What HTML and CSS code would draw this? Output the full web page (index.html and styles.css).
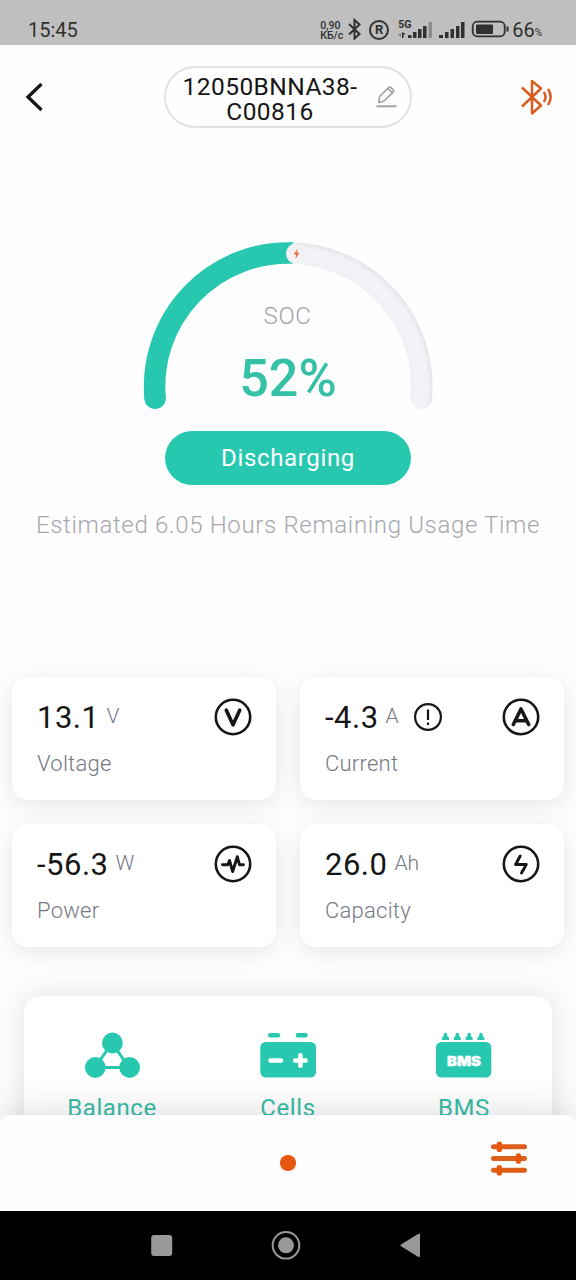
FILE: index.html
```html
<!DOCTYPE html>
<html lang="en">
<head>
<meta charset="utf-8">
<title>Battery monitor</title>
<link rel="stylesheet" href="styles.css">
</head>
<body>
<div class="screen">
  <div class="status">
    <span class="clock">15:45</span>
    <div class="indicators">
      <div class="speed"><span>0,90</span><span>КБ/с</span></div>
      <svg class="ind-bt" width="14" height="22" viewBox="347 18 14 22"><path d="M348 24l10.500 10-5 4.500V20l5 4.500L348 34.500" fill="none" stroke="#303030" stroke-width="2"/></svg>
      <div class="registered">R</div>
      <div class="network">
        <span class="network-type">5G</span>
        <svg width="35" height="20" viewBox="397 20 35 20"><g fill="#303030"><path d="M401 32l3.500 2-2 1v3H401zM407 35h3.500v3H407zM412 32h3.500v6H412zM417 29h3.500v9H417zM422 26h3.500v12H422z"/><path d="M397 35l3-2v4z" opacity=".45"/><path d="M427.500 22h3.500v16h-3.500z" opacity=".35"/></g></svg>
      </div>
      <svg class="ind-signal" width="27" height="20" viewBox="438 20 27 20"><path d="M438 35h4v3h-4zM444 32h3.500v6H444zM449.500 29h3.500v9h-3.500zM455 26h3.500v12H455zM460 22h3.500v16H460z" fill="#303030"/></svg>
      <svg class="ind-battery" width="38" height="18" viewBox="470 20 38 18"><rect x="471.700" y="21.700" width="32" height="14.600" rx="4.500" fill="none" stroke="#303030" stroke-width="1.800"/><rect x="475" y="24.500" width="17" height="9.500" rx="1" fill="#303030"/><path d="M506.500 26.500v5" stroke="#303030" stroke-width="2"/></svg>
      <span class="charge">66</span><span class="pct">%</span>
    </div>
  </div>

  <div class="header">
    <svg width="20" height="32" viewBox="24 81 20 32"><path d="M41.500 84L28 97l13.500 13" fill="none" stroke="#161616" stroke-width="3.300"/></svg>
    <div class="device">
      <div class="device-name"><span>12050BNNA38-</span><span>C00816</span></div>
      <svg width="22" height="24" viewBox="376 85 22 24"><g fill="none" stroke="#a2a2a8"><path d="M378.800 102.500l.8-6 9-8.800q1.200-1 2.400 0l2.200 2.200q1 1.200 0 2.300l-9.200 8.800zM388 88.700l4.800 4.600" stroke-width="1.700" stroke-linejoin="round"/><path d="M376.500 106.300h20" stroke-width="2"/></g></svg>
    </div>
    <svg width="34" height="38" viewBox="519 78 34 38"><g fill="none" stroke="#d95d20" stroke-width="2.500" stroke-linejoin="round"><path d="M522 87.500L541 105.500l-9 8V81l9 7.500L522 106.500"/><path d="M543.800 92q3.600 5 0 10M548 89q5.300 8 0 16"/></g></svg>
  </div>

  <div class="summary">
    <div class="gauge">
      <svg width="300" height="180" viewBox="138 236 300 180">
        <defs>
          <radialGradient id="track" gradientUnits="userSpaceOnUse" cx="288.300" cy="386.500" r="145">
            <stop offset=".85" stop-color="#f0f1f5"/><stop offset=".91" stop-color="#f3f4f8"/><stop offset=".96" stop-color="#f1f2f6"/><stop offset="1" stop-color="#e2e3e6"/>
          </radialGradient>
        </defs>
        <path d="M288.300 253A133.500 133.500 0 0 1 421.300 398.200" fill="none" stroke="url(#track)" stroke-width="21.500" stroke-linecap="round"/>
        <path d="M155.100 398.200A133.500 133.500 0 0 1 293 253.100" fill="none" stroke="#28c8b0" stroke-width="21.500"/>
        <circle cx="155.100" cy="398.200" r="10.750" fill="#28c8b0"/>
        <circle cx="296.500" cy="253.600" r="10.500" fill="#f2f2f4"/>
        <path d="M297.800 248.500l-4.300 6h2.800l-1 4.500 4.400-6.200h-2.900z" fill="#e4703c"/>
      </svg>
      <div class="reading"><span class="soc">SOC</span><span class="soc-value">52%</span></div>
    </div>
    <div class="state">Discharging</div>
    <div class="estimate">Estimated 6.05 Hours Remaining Usage Time</div>
  </div>

  <div class="cards">
    <div class="card">
      <div class="value-row"><span class="value">13.1</span><span class="unit">V</span>
        <svg class="card-icon" width="40" height="40" viewBox="-20 -20 40 40"><circle r="17.200"/><path class="bold" d="M-6.700-6.800L0 7.800 6.700-6.800"/></svg>
      </div>
      <div class="label">Voltage</div>
    </div>
    <div class="card">
      <div class="value-row"><span class="value">-4.3</span><span class="unit">A</span>
        <svg class="notice" width="30" height="30" viewBox="-15 -15 30 30"><circle r="12.900"/><path d="M0-7.500V3M0 5.500V8"/></svg>
        <svg class="card-icon" width="40" height="40" viewBox="-20 -20 40 40"><circle r="17.200"/><path class="bold" d="M-7.700 7.500L0-8 7.700 7.500M-5 3.800H5"/></svg>
      </div>
      <div class="label">Current</div>
    </div>
    <div class="card">
      <div class="value-row"><span class="value">-56.3</span><span class="unit">W</span>
        <svg class="card-icon" width="40" height="40" viewBox="-20 -20 40 40"><circle r="17.200"/><path class="pulse" d="M-10.500.8H-5.300L-3.500-3.500-.3 7.500 4.300-7.300 6.500.8H10.500"/></svg>
      </div>
      <div class="label">Power</div>
    </div>
    <div class="card">
      <div class="value-row"><span class="value">26.0</span><span class="unit">Ah</span>
        <svg class="card-icon" width="40" height="40" viewBox="-20 -20 40 40"><circle r="17.200"/><path class="pulse" d="M-.8-8L-5.400.5H5.300L.5 9"/></svg>
      </div>
      <div class="label">Capacity</div>
    </div>
  </div>

  <div class="panel-area">
    <div class="panel">
      <div class="tool">
        <svg width="60" height="50" viewBox="82 1030 60 50"><path d="M112 1043L95 1067.500h34z" fill="none" stroke="#28c8b0" stroke-width="3"/><g fill="#28c8b0"><circle cx="112.400" cy="1043" r="10.400"/><circle cx="95.300" cy="1067.500" r="10.400"/><circle cx="129.600" cy="1067.500" r="10.400"/></g></svg>
        <span>Balance</span>
      </div>
      <div class="tool">
        <svg width="60" height="50" viewBox="258 1030 60 50"><rect x="260.300" y="1042" width="55.700" height="35.500" rx="5.500" fill="#28c8b0"/><path d="M270.300 1035.200h7.500M298 1035.200h7.500" stroke="#28c8b0" stroke-width="4.600" stroke-linecap="round"/><path d="M270.500 1060.500h10.500M295.200 1060.500h10.500M300.400 1055.200v10.600" stroke="#fff" stroke-width="4.600" stroke-linecap="round"/></svg>
        <span>Cells</span>
      </div>
      <div class="tool">
        <div class="bms-icon">
          <svg width="60" height="50" viewBox="434 1030 60 50"><rect x="436" y="1042" width="55.300" height="35.500" rx="5.500" fill="#28c8b0"/><g fill="#28c8b0"><path id="pin" d="M444 1033.500q1.500-1.500 3 0l.5 3 1.500 1v2.600h-7v-2.600l1.500-1z"/><use href="#pin" x="11.800"/><use href="#pin" x="23.600"/><use href="#pin" x="35.400"/></g></svg>
          <b>BMS</b>
        </div>
        <span>BMS</span>
      </div>
    </div>
  </div>

  <div class="tabbar">
    <i class="page-dot"></i>
    <svg class="settings" width="38" height="36" viewBox="490 1141 38 36"><g stroke="#dd5f1b" stroke-width="5" stroke-linecap="round"><path d="M493.500 1146.800h31M493.500 1158.500h31M493.500 1170.300h31"/></g><g fill="#e7570e"><rect x="496.700" y="1141.500" width="5.300" height="10.600" rx="2.600"/><rect x="515.800" y="1153.200" width="5.300" height="10.600" rx="2.600"/><rect x="496.700" y="1165" width="5.300" height="10.600" rx="2.600"/></g></svg>
  </div>

  <div class="navbar">
    <svg width="22" height="30" viewBox="151 1230 22 30"><rect x="151.200" y="1235" width="21" height="21" rx="3" fill="#999"/></svg>
    <svg width="30" height="30" viewBox="271 1230 30 30"><circle cx="286" cy="1245.300" r="13.300" fill="none" stroke="#999" stroke-width="2"/><circle cx="286" cy="1245.300" r="8" fill="#999"/></svg>
    <svg width="20" height="30" viewBox="400 1230 20 30"><path d="M401.500 1245.300l17.500-10.800v21.600z" fill="#999" stroke="#999" stroke-width="2" stroke-linejoin="round"/></svg>
  </div>
</div>
</body>
</html>
```
FILE: styles.css
```css
* { box-sizing: border-box; }
body { margin: 0; font-family: Roboto, "Liberation Sans", sans-serif; background: #fff; }
svg { display: block; flex: none; }

.screen { width: 576px; height: 1280px; display: flex; flex-direction: column; overflow: hidden; background: #fefefe; }

.status { height: 45px; flex: none; background: #bfbfbf; color: #303030; display: flex; justify-content: space-between; padding: 18px 34px 0 28px; }
.clock { font-size: 20px; line-height: 24px; }
.indicators { display: flex; align-items: flex-start; }
.speed { display: flex; flex-direction: column; width: 23px; margin-top: 3px; font-size: 10.500px; font-weight: 500; line-height: 10px; white-space: nowrap; }
.ind-bt { margin-left: 5px; }
.registered { width: 20px; height: 20px; margin: 2px 0 0 7px; border: 2px solid #303030; border-radius: 50%; font-size: 13px; font-weight: 700; line-height: 16px; text-align: center; }
.network { display: grid; width: 35px; margin: 2px 0 0 9px; }
.network > * { grid-area: 1 / 1; }
.network-type { font-size: 10.500px; font-weight: 700; line-height: 10px; }
.ind-signal { margin: 2px 0 0 6px; }
.ind-battery { margin: 2px 0 0 5px; }
.charge { margin-left: 3px; font-size: 20px; line-height: 24px; }
.pct { font-size: 10px; line-height: 10px; margin: 10px 0 0 0; }

.header { flex: none; height: 105px; display: flex; justify-content: space-between; padding: 21px 23px 0 24px; align-items: flex-start; }
.header > svg:first-child { margin-top: 15px; }
.header > svg:last-child { margin-top: 12px; }
.device { width: 248px; height: 62px; margin-left: 13px; border: 2px solid #e2e2e4; border-radius: 31px; display: flex; align-items: center; gap: 18px; padding: 3px 0 0 16px; }
.device-name { width: 176px; flex: none; display: flex; flex-direction: column; align-items: center; font-size: 24.500px; line-height: 25px; letter-spacing: .45px; color: #161616; white-space: nowrap; }
.device svg { margin-top: -3px; }

.summary { flex: none; height: 527px; padding-top: 86px; display: flex; flex-direction: column; align-items: center; }
.gauge { display: grid; }
.gauge > * { grid-area: 1 / 1; }
.reading { display: flex; flex-direction: column; align-items: center; padding-top: 65px; }
.soc { margin-right: 1px; font-size: 24px; line-height: 30px; font-weight: 300; letter-spacing: .6px; color: #a3a3ad; }
.soc-value { margin-top: 18px; font-size: 52px; line-height: 60px; font-weight: 500; color: #35c1a5; }
.state { width: 246px; height: 54px; margin-top: 15px; border-radius: 27px; background: #28c8b0; color: #fff; font-size: 24px; line-height: 54px; letter-spacing: .65px; text-align: center; }
.estimate { margin-top: 25px; font-size: 24px; line-height: 30px; font-weight: 300; letter-spacing: .66px; color: #a7a7b0; white-space: nowrap; }

.cards { flex: none; display: grid; grid-template-columns: 264px 264px; grid-auto-rows: 123px; column-gap: 24px; row-gap: 24px; padding: 0 12px; }
.card { border-radius: 16px; background: #fff; padding: 20px 23px 0 25px; box-shadow: 0 5px 22px rgba(70, 70, 90, .13); }
.value-row { display: flex; align-items: center; height: 40px; }
.value { margin-top: 2px; font-size: 31px; line-height: 40px; letter-spacing: .5px; color: #161616; }
.unit { margin: -2px 0 0 7px; font-size: 21px; font-weight: 300; color: #757985; }
.card-icon { margin-left: auto; fill: none; stroke: #161616; stroke-width: 2.600; stroke-linecap: round; stroke-linejoin: round; }
.card-icon .bold { stroke-width: 3.600; }
.card-icon .pulse { stroke-width: 2.900; }
.notice { margin-left: 14px; fill: none; stroke: #161616; stroke-width: 2.200; }
.label { margin-top: 14px; font-size: 22px; line-height: 26px; font-weight: 300; letter-spacing: .25px; color: #757985; }

.panel-area { flex: 1; min-height: 0; padding: 49px 24px 0; }
.panel { height: 180px; border-radius: 16px; background: #fff; box-shadow: 0 0 30px rgba(70, 70, 90, .16); display: grid; grid-template-columns: repeat(3, 1fr); padding-top: 34px; }
.tool { display: flex; flex-direction: column; align-items: center; font-size: 24px; line-height: 30px; letter-spacing: .6px; color: #35bda3; }
.tool > span { margin-top: 13px; }
.bms-icon { display: grid; }
.bms-icon > * { grid-area: 1 / 1; }
.bms-icon b { padding-top: 16px; font-family: Inter, Roboto, sans-serif; font-weight: 900; font-size: 13px; letter-spacing: 0; color: #fff; text-align: center; transform: scaleX(1.140); -webkit-text-stroke: .4px #fff; }

.tabbar { flex: none; position: relative; height: 96px; background: #fefefe; border-radius: 10px 10px 0 0; box-shadow: 0 -4px 34px rgba(70, 70, 90, .17); display: grid; grid-template-columns: 1fr 16px 1fr; align-items: center; }
.page-dot { grid-column: 2; width: 15.500px; height: 15.500px; border-radius: 50%; background: #e7570e; }
.settings { justify-self: end; margin: -8px 48px 0 0; }

.navbar { flex: none; position: relative; height: 69px; background: #000; display: flex; align-items: center; padding: 0 0 1px 151px; }
.navbar svg:nth-child(2) { margin-left: 98px; }
.navbar svg:nth-child(3) { margin-left: 99px; }
```
